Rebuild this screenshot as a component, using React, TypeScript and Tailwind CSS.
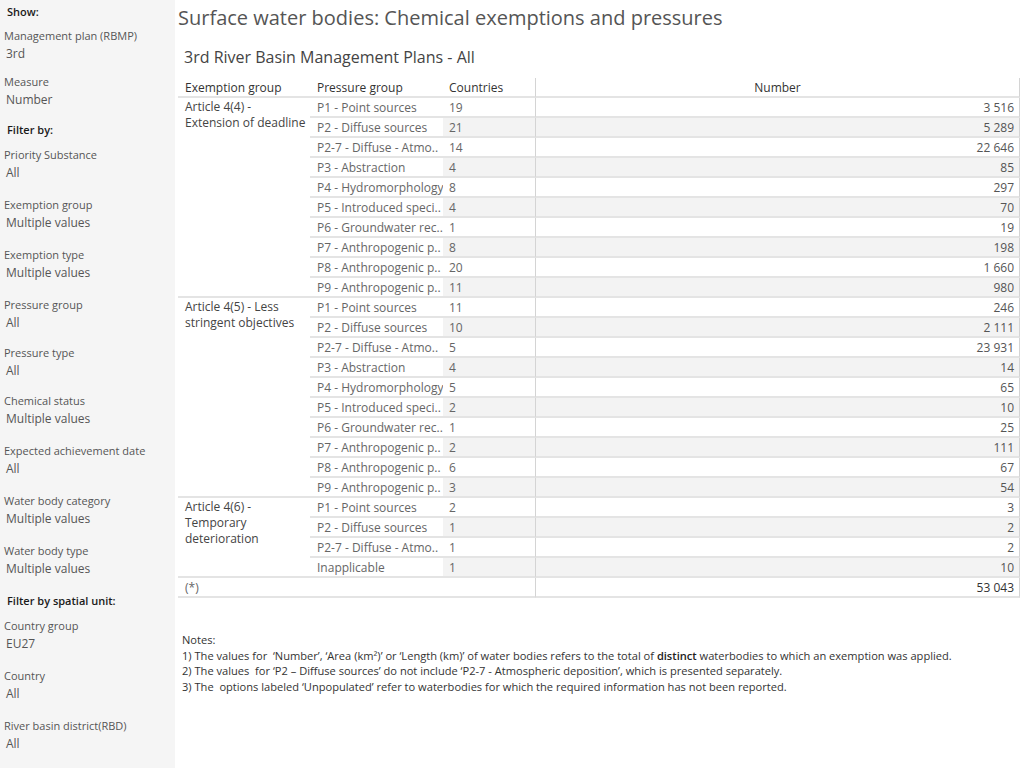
import React from 'react';

type SideItem = { kind: 'head' | 'filter'; label: string; value?: string; h: number };

const sideItems: SideItem[] = [
  { kind: 'head', label: 'Show:', h: 24 },
  { kind: 'filter', label: 'Management plan (RBMP)', value: '3rd', h: 46 },
  { kind: 'filter', label: 'Measure', value: 'Number', h: 48 },
  { kind: 'head', label: 'Filter by:', h: 25 },
  { kind: 'filter', label: 'Priority Substance', value: 'All', h: 50 },
  { kind: 'filter', label: 'Exemption group', value: 'Multiple values', h: 50 },
  { kind: 'filter', label: 'Exemption type', value: 'Multiple values', h: 50 },
  { kind: 'filter', label: 'Pressure group', value: 'All', h: 48 },
  { kind: 'filter', label: 'Pressure type', value: 'All', h: 48 },
  { kind: 'filter', label: 'Chemical status', value: 'Multiple values', h: 50 },
  { kind: 'filter', label: 'Expected achievement date', value: 'All', h: 50 },
  { kind: 'filter', label: 'Water body category', value: 'Multiple values', h: 50 },
  { kind: 'filter', label: 'Water body type', value: 'Multiple values', h: 50 },
  { kind: 'head', label: 'Filter by spatial unit:', h: 25 },
  { kind: 'filter', label: 'Country group', value: 'EU27', h: 50 },
  { kind: 'filter', label: 'Country', value: 'All', h: 50 },
  { kind: 'filter', label: 'River basin district(RBD)', value: 'All', h: 50 },
];

type Row = [string, string, string];
type Group = { name: string; rows: Row[] };

const groups: Group[] = [
  {
    name: 'Article 4(4) - Extension of deadline',
    rows: [
      ['P1 - Point sources', '19', '3 516'],
      ['P2 - Diffuse sources', '21', '5 289'],
      ['P2-7 - Diffuse - Atmo..', '14', '22 646'],
      ['P3 - Abstraction', '4', '85'],
      ['P4 - Hydromorphology', '8', '297'],
      ['P5 - Introduced speci..', '4', '70'],
      ['P6 - Groundwater rec..', '1', '19'],
      ['P7 - Anthropogenic p..', '8', '198'],
      ['P8 - Anthropogenic p..', '20', '1 660'],
      ['P9 - Anthropogenic p..', '11', '980'],
    ],
  },
  {
    name: 'Article 4(5) - Less stringent objectives',
    rows: [
      ['P1 - Point sources', '11', '246'],
      ['P2 - Diffuse sources', '10', '2 111'],
      ['P2-7 - Diffuse - Atmo..', '5', '23 931'],
      ['P3 - Abstraction', '4', '14'],
      ['P4 - Hydromorphology', '5', '65'],
      ['P5 - Introduced speci..', '2', '10'],
      ['P6 - Groundwater rec..', '1', '25'],
      ['P7 - Anthropogenic p..', '2', '111'],
      ['P8 - Anthropogenic p..', '6', '67'],
      ['P9 - Anthropogenic p..', '3', '54'],
    ],
  },
  {
    name: 'Article 4(6) - Temporary deterioration',
    rows: [
      ['P1 - Point sources', '2', '3'],
      ['P2 - Diffuse sources', '1', '2'],
      ['P2-7 - Diffuse - Atmo..', '1', '2'],
      ['Inapplicable', '1', '10'],
    ],
  },
];

const Sidebar = () => (
  <div className="w-[175px] shrink-0 bg-[#f5f5f5] pt-[4px] min-h-[768px]">
    {sideItems.map((it) =>
      it.kind === 'head' ? (
        <div key={it.label} style={{ height: it.h }} className="pl-[7px] text-[11px] leading-[16px] text-[#1a1a1a] font-semibold">
          {it.label}
        </div>
      ) : (
        <div key={it.label} style={{ height: it.h }}>
          <div className="pl-[4px] text-[11px] leading-[16px] text-[#555]">{it.label}</div>
          <div className="pl-[6px] pt-[1px] text-[12px] leading-[18px] text-[#555]">{it.value}</div>
        </div>
      )
    )}
  </div>
);

const DataTable = () => (
  <div className="grid grid-cols-[132px_133px_92px_1fr] w-[842px] text-[12px] leading-[19px]">
    {/* header */}
    <div className="h-[20px] leading-[20px] border-b-2 border-[#e4e4e4] pl-[7px] text-[#333]">Exemption group</div>
    <div className="h-[20px] leading-[20px] border-b-2 border-[#e4e4e4] pl-[7px] text-[#333]">Pressure group</div>
    <div className="h-[20px] leading-[20px] border-b-2 border-[#e4e4e4] pl-[6px] text-[#333]">Countries</div>
    <div className="h-[20px] leading-[20px] border-b-2 border-[#e4e4e4] border-l border-r border-l-[#d4d4d4] border-r-[#d4d4d4] text-center text-[#333]">
      Number
    </div>

    {groups.map((g) => (
      <React.Fragment key={g.name}>
        <div
          style={{ gridRow: `span ${g.rows.length}` }}
          className="border-b-2 border-[#e4e4e4] pl-[7px] pr-[4px] pt-[1px] leading-[16px] text-[#444]"
        >
          {g.name}
        </div>
        {g.rows.map((r, i) => {
          const band = i % 2 === 1 ? 'bg-[#f3f3f3]' : 'bg-white';
          return (
            <React.Fragment key={r[0] + i}>
              <div className="h-[20px] border-b-2 border-[#e4e4e4] pl-[7px] text-[#666] whitespace-nowrap">{r[0]}</div>
              <div className={`h-[20px] border-b-2 border-[#e4e4e4] pl-[6px] text-[#666] ${band}`}>{r[1]}</div>
              <div className={`h-[20px] border-b-2 border-[#e4e4e4] border-l border-r border-l-[#d4d4d4] border-r-[#d4d4d4] pr-[5px] text-right text-[#555] ${band}`}>
                {r[2]}
              </div>
            </React.Fragment>
          );
        })}
      </React.Fragment>
    ))}

    {/* total */}
    <div className="col-span-3 h-[20px] border-b-2 border-[#e4e4e4] pl-[7px] text-[#666]">(*)</div>
    <div className="h-[20px] border-b-2 border-[#e4e4e4] border-l border-r border-l-[#d4d4d4] border-r-[#d4d4d4] pr-[5px] text-right text-[#333]">53 043</div>
  </div>
);

export default function App() {
  return (
    <div className="flex w-[1024px] min-h-[768px] bg-white font-['Open_Sans',sans-serif]">
      <Sidebar />
      <div className="flex-1 pl-[3px] pt-[5px]">
        <h1 className="text-[20px] leading-[26px] text-[#555]">Surface water bodies: Chemical exemptions and pressures</h1>
        <h2 className="mt-[15px] pl-[6px] text-[16px] leading-[22px] text-[#444]">3rd River Basin Management Plans - All</h2>
        <div className="mt-[10px]">
          <DataTable />
        </div>
        <div className="mt-[34px] pl-[4px] text-[11.1px] leading-[15.5px] text-[#333]">
          <div>Notes:</div>
          <div>
            1) The values for &nbsp;‘Number’, ‘Area (km²)’ or ‘Length (km)’ of water bodies refers to the total of{' '}
            <span className="font-semibold text-[#222]">distinct</span> waterbodies to which an exemption was applied.
          </div>
          <div>2) The values &nbsp;for ‘P2 – Diffuse sources’ do not include ‘P2-7 - Atmospheric deposition’, which is presented separately.</div>
          <div>3) The &nbsp;options labeled ‘Unpopulated’ refer to waterbodies for which the required information has not been reported.</div>
        </div>
      </div>
    </div>
  );
}
